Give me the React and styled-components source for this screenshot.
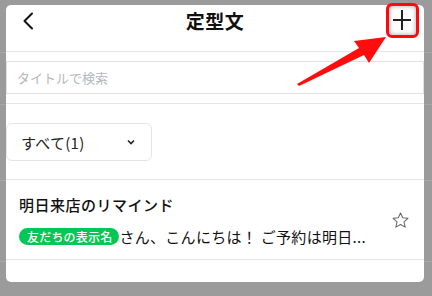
import React from 'react';
import styled, { createGlobalStyle } from 'styled-components';

const GlobalStyle = createGlobalStyle`
    html, body {
        margin: 0;
        padding: 0;
    }
    body {
        font-family: "Noto Sans CJK JP", "Noto Sans", sans-serif;
        color: #111;
    }
`;

// the grey veil over the page; rows of the page behind still show faintly through it
const Page = styled.div`
    position: relative;
    width: 432px;
    height: 296px;
    padding: 5px 8px 0 6px;
    box-sizing: border-box;
    background:
        linear-gradient(#a6a7aa, #a6a7aa) 0 52px / 100% 1px no-repeat,
        linear-gradient(#a6a7aa, #a6a7aa) 0 104px / 100% 1px no-repeat,
        linear-gradient(#a6a7aa, #a6a7aa) 0 180px / 100% 1px no-repeat,
        linear-gradient(#a6a7aa, #a6a7aa) 0 261px / 100% 1px no-repeat,
        #9b9b9b;
    overflow: hidden;
`;

const Card = styled.div`
    height: 277px;
    background: #fff;
    border-radius: 5px;
    overflow: hidden;
    display: flex;
    flex-direction: column;
`;

const Header = styled.div`
    height: 47px;
    box-sizing: border-box;
    display: grid;
    grid-template-columns: 40px 1fr 40px;
    grid-template-rows: 32px;
    align-items: center;
    padding: 0 12px 0 15px;
    border-bottom: 1px solid #e3e5e9;
    flex-shrink: 0;
`;

const Title = styled.h1`
    margin: 0;
    text-align: center;
    font-size: 19px;
    font-weight: 700;
    letter-spacing: 0.5px;
    line-height: 32px;
    padding-right: 3px;
    color: #111;
`;

const IconButton = styled.button`
    border: 0;
    background: none;
    padding: 0;
    display: flex;
    justify-content: ${(props) => (props.end ? 'flex-end' : 'flex-start')};
    align-items: center;
    margin-top: ${(props) => (props.end ? '-2px' : '0')};
    cursor: pointer;
`;

const SearchSection = styled.div`
    padding: 9px 0;
    border-bottom: 1px solid #e3e5e9;
`;

const SearchInput = styled.input`
    display: block;
    width: 100%;
    height: 33px;
    box-sizing: border-box;
    border: 1px solid #dfe1e5;
    padding: 0 10px;
    font-family: inherit;
    font-size: 13px;
    outline: none;
    &::placeholder {
        color: #b4b8be;
    }
`;

const FilterSection = styled.div`
    padding: 19px 0 18px;
    border-bottom: 1px solid #e3e5e9;
`;

const Select = styled.div`
    width: 146px;
    height: 38px;
    box-sizing: border-box;
    border: 1px solid #e2e4e8;
    border-radius: 6px;
    display: flex;
    align-items: center;
    justify-content: space-between;
    padding: 0 16px 0 14px;
    font-size: 15px;
    letter-spacing: 0.3px;
    color: #222;
`;

const Item = styled.div`
    height: 80px;
    box-sizing: border-box;
    border-bottom: 1px solid #e3e5e9;
    display: flex;
    align-items: center;
    padding: 2px 14px 0 13px;
`;

const ItemBody = styled.div`
    flex: 1;
    min-width: 0;
    display: flex;
    flex-direction: column;
    gap: 12px;
`;

const ItemTitle = styled.div`
    font-size: 15px;
    font-weight: 500;
    line-height: 20px;
    letter-spacing: 0.5px;
`;

const Preview = styled.div`
    display: flex;
    align-items: center;
    font-size: 15px;
    line-height: 20px;
    letter-spacing: 0.3px;
    white-space: nowrap;
`;

const Tag = styled.span`
    display: inline-flex;
    align-items: center;
    height: 17px;
    padding: 0 7px 0 8px;
    border-radius: 9px;
    background: #06c755;
    color: #fff;
    font-size: 12px;
    font-weight: 500;
    letter-spacing: 0.2px;
`;

const Highlight = styled.div`
    position: absolute;
    left: 386px;
    top: 3px;
    width: 33px;
    height: 35px;
    box-sizing: border-box;
    border: 3px solid #ff0a0a;
    border-radius: 6px;
    box-shadow: inset 0 0 5px rgba(0, 0, 0, 0.35);
`;

const Annotation = styled.svg`
    position: absolute;
    left: 0;
    top: 0;
    pointer-events: none;
`;

const BackIcon = () => (
    <svg width="14" height="18" viewBox="0 0 14 18">
        <path d="M11 1.5 L3.5 9 L11 16.5" fill="none" stroke="#111" strokeWidth="2" strokeLinecap="round" strokeLinejoin="round" />
    </svg>
);

const PlusIcon = () => (
    <svg width="20" height="22" viewBox="0 0 20 22">
        <path d="M10 1 V21 M1 11 H19" stroke="#222" strokeWidth="2" />
    </svg>
);

const ChevronDown = () => (
    <svg width="8" height="6" viewBox="0 0 8 6">
        <path d="M1 1.5 L4 4.5 L7 1.5" fill="none" stroke="#222" strokeWidth="1.6" />
    </svg>
);

const StarIcon = () => (
    <svg width="19" height="19" viewBox="0 0 24 24">
        <path
            d="M12 2.5 L14.8 8.6 L21.4 9.3 L16.4 13.8 L17.9 20.4 L12 17 L6.1 20.4 L7.6 13.8 L2.6 9.3 L9.2 8.6 Z"
            fill="none"
            stroke="#666"
            strokeWidth="1.3"
            strokeLinejoin="round"
        />
    </svg>
);

const App = () => {
    return (
        <>
            <GlobalStyle />
            <Page>
                <Card>
                    <Header>
                        <IconButton>
                            <BackIcon />
                        </IconButton>
                        <Title>定型文</Title>
                        <IconButton end>
                            <PlusIcon />
                        </IconButton>
                    </Header>
                    <SearchSection>
                        <SearchInput placeholder="タイトルで検索" />
                    </SearchSection>
                    <FilterSection>
                        <Select>
                            <span>すべて(1)</span>
                            <ChevronDown />
                        </Select>
                    </FilterSection>
                    <Item>
                        <ItemBody>
                            <ItemTitle>明日来店のリマインド</ItemTitle>
                            <Preview>
                                <Tag>友だちの表示名</Tag>
                                <span>さん、こんにちは！ ご予約は明日...</span>
                            </Preview>
                        </ItemBody>
                        <StarIcon />
                    </Item>
                </Card>
                <Highlight />
                <Annotation width="432" height="296" viewBox="0 0 432 296">
                    <polygon
                        points="297,84 359,48 354,41 386,37 369,63 364,55 299,86"
                        fill="#ff0d0d"
                    />
                </Annotation>
            </Page>
        </>
    );
};

export default App;
